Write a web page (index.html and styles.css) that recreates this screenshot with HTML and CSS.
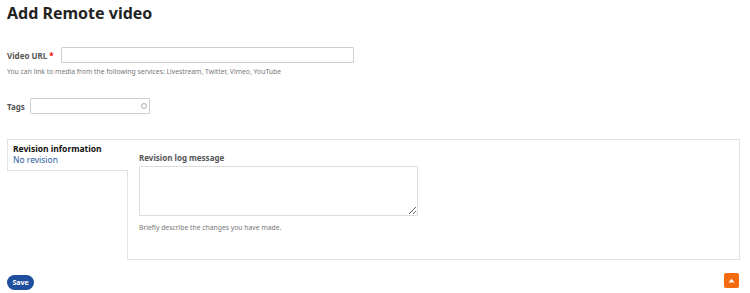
FILE: index.html
```html
<!DOCTYPE html>
<html lang="en">
<head>
    <meta charset="UTF-8">
    <meta name="viewport" content="width=device-width, initial-scale=1.0">
    <title>Add Remote video</title>
    <link rel="stylesheet" href="styles.css">
</head>
<body>
    <div class="page">
        <h1 class="title">Add Remote video</h1>

        <div class="form-item">
            <div class="row">
                <label class="label url-label" for="url">Video URL <span class="required">*</span></label>
                <input type="text" class="input url" id="url">
            </div>
            <div class="description">You can link to media from the following services: Livestream, Twitter, Vimeo, YouTube</div>
        </div>

        <div class="form-item tags-item">
            <div class="row">
                <label class="label" for="tags">Tags</label>
                <div class="autocomplete">
                    <input type="text" class="input tags" id="tags">
                    <span class="throbber"></span>
                </div>
            </div>
        </div>

        <div class="vertical-tabs">
            <div class="tabs-menu">
                <div class="tab-item">
                    <div class="tab-title">Revision information</div>
                    <div class="tab-summary">No revision</div>
                </div>
            </div>
            <div class="tabs-pane">
                <label class="label pane-label" for="log">Revision log message</label>
                <textarea class="textarea" id="log"></textarea>
                <div class="description">Briefly describe the changes you have made.</div>
            </div>
        </div>

        <button class="save">Save</button>
    </div>

    <a class="back-to-top" href="#">
        <svg width="7" height="5" viewBox="0 0 7 5"><path d="M0.5 4.5 L3.5 0.8 L6.5 4.5 Z" fill="#fff"/></svg>
    </a>
</body>
</html>
```

FILE: styles.css
```css
body {
    margin: 0;
    font-family: "Noto Sans", "Open Sans", sans-serif;
    color: #333;
    background: #fff;
}
.page {
    padding: 0 10px 0 7px;
}
.title {
    margin: 2px 0 0;
    font-size: 16px;
    line-height: 23px;
    font-weight: 700;
    color: #232323;
}
.form-item {
    margin-top: 22px;
}
.tags-item {
    margin-top: 21px;
}
.row {
    display: flex;
    align-items: center;
    height: 16px;
}
.label {
    font-size: 8px;
    font-weight: 700;
    color: #555;
    margin-right: 5px;
    white-space: nowrap;
}
.url-label {
    margin-right: 7px;
}
.required {
    color: #e00;
}
.input {
    box-sizing: border-box;
    height: 16px;
    border: 1px solid #cfcfcf;
    border-radius: 1px;
    padding: 0 4px;
    font: inherit;
    font-size: 8px;
    background: #fff;
}
.url {
    width: 293px;
}
.autocomplete {
    position: relative;
}
.tags {
    width: 120px;
    display: block;
}
.throbber {
    position: absolute;
    right: 3px;
    top: 5px;
    width: 4px;
    height: 4px;
    border: 1px solid #aaa;
    border-radius: 50%;
}
.description {
    margin-top: 4px;
    font-size: 6.8px;
    line-height: 10px;
    color: #777;
}
.vertical-tabs {
    display: flex;
    margin-top: 25px;
    height: 121px;
}
.tabs-menu {
    width: 120px;
    flex: none;
}
.tab-item {
    position: relative;
    z-index: 1;
    box-sizing: border-box;
    height: 32px;
    margin-right: -1px;
    padding: 3px 5px;
    border: 1px solid #e2e2e2;
    border-right: none;
    background: #fff;
}
.tab-title {
    font-size: 8.5px;
    font-weight: 700;
    line-height: 11px;
    color: #111;
}
.tab-summary {
    font-size: 8.5px;
    line-height: 11px;
    color: #2a5aa0;
}
.tabs-pane {
    flex: 1;
    box-sizing: border-box;
    border: 1px solid #e2e2e2;
    padding: 11px 11px 0;
}
.pane-label {
    display: block;
    line-height: 13px;
}
.textarea {
    display: block;
    box-sizing: border-box;
    width: 279px;
    height: 50px;
    margin-top: 2px;
    border: 1px solid #dcdcdc;
    border-radius: 1px;
    font: inherit;
    font-size: 8px;
}
.tabs-pane .description {
    margin-top: 7px;
}
.save {
    display: block;
    margin-top: 15px;
    height: 15px;
    width: 27px;
    padding: 0;
    border: none;
    border-radius: 8px;
    background: #1f4f9c;
    color: #fff;
    font: inherit;
    font-size: 7px;
    font-weight: 700;
    cursor: pointer;
}
.back-to-top {
    position: absolute;
    right: 11px;
    top: 273px;
    width: 15px;
    height: 15px;
    border-radius: 2px;
    background: #f36b0e;
    display: flex;
    align-items: center;
    justify-content: center;
}
```
